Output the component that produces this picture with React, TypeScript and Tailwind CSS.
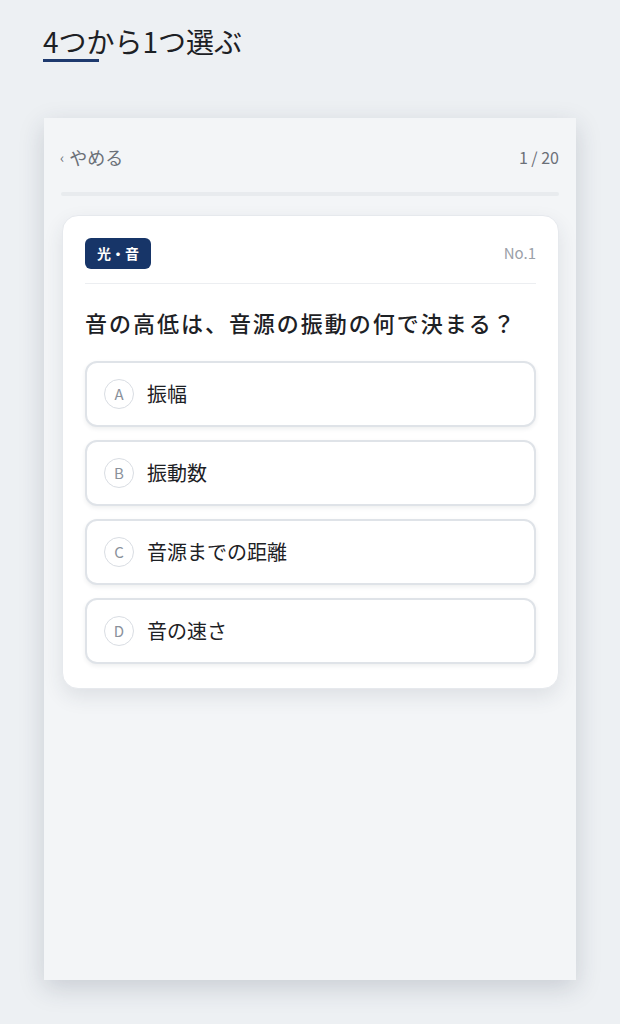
import React from 'react';

const choices = [
    { key: "A", text: "振幅" },
    { key: "B", text: "振動数" },
    { key: "C", text: "音源までの距離" },
    { key: "D", text: "音の速さ" },
];

const font = { fontFamily: '"Noto Sans CJK JP", "Noto Sans", sans-serif' };

const App = () => {
    return (
        <div className="min-h-[1024px] bg-[#edf0f3] px-[43px] pt-[22px]" style={font}>
            {/* Page title */}
            <div className="inline-block">
                <h1 className="text-[28px] leading-[38px] font-normal text-[#1d2125]">4つから1つ選ぶ</h1>
                <div className="w-[56px] h-[3px] bg-[#1e3a6e] mt-[-1px]"></div>
            </div>

            {/* Quiz panel */}
            <div className="mt-[56px] ml-[1px] w-[532px] h-[862px] bg-[#f3f5f7] shadow-[0_8px_24px_rgba(40,50,70,0.18)] px-[17px] pt-[26px]">
                <div className="flex items-center justify-between">
                    <button className="flex items-center gap-[5px] text-[18px] leading-[26px] text-[#6b7078] -ml-[1px]">
                        <span className="text-[14px]">‹</span>
                        <span>やめる</span>
                    </button>
                    <span className="text-[16px] text-[#6b7078]">1 / 20</span>
                </div>
                <div className="mt-[22px] h-[4px] rounded-full bg-[#e8ebee]"></div>

                {/* Question card */}
                <div className="mt-[19px] ml-[1px] bg-white rounded-[16px] border border-[#e6e9ed] shadow-[0_8px_20px_rgba(40,50,70,0.10)] px-[22px] pt-[22px] pb-[24px]">
                    <div className="flex items-center justify-between pb-[14px] border-b border-[#eceef1]">
                        <span className="bg-[#173568] text-white text-[14px] font-bold rounded-[6px] px-[12px] h-[31px] flex items-center">光・音</span>
                        <span className="text-[15px] text-[#9aa0a8]">No.1</span>
                    </div>
                    <p className="mt-[22px] text-[22px] leading-[32px] font-medium text-[#1d2125] tracking-[0.09em]">音の高低は、音源の振動の何で決まる？</p>
                    <div className="mt-[23px] flex flex-col gap-[13px]">
                        {choices.map((c) => (
                            <button key={c.key} className="h-[66px] w-full flex items-center gap-[13px] px-[17px] bg-white rounded-[12px] border-2 border-[#dfe3e8] shadow-[0_2px_4px_rgba(40,50,70,0.08)] text-left">
                                <span className="w-[30px] h-[30px] rounded-full border border-[#d9dde3] flex items-center justify-center text-[15px] text-[#8a919b]">{c.key}</span>
                                <span className="text-[20px] text-[#1d2125]">{c.text}</span>
                            </button>
                        ))}
                    </div>
                </div>
            </div>
        </div>
    );
};

export default App;
